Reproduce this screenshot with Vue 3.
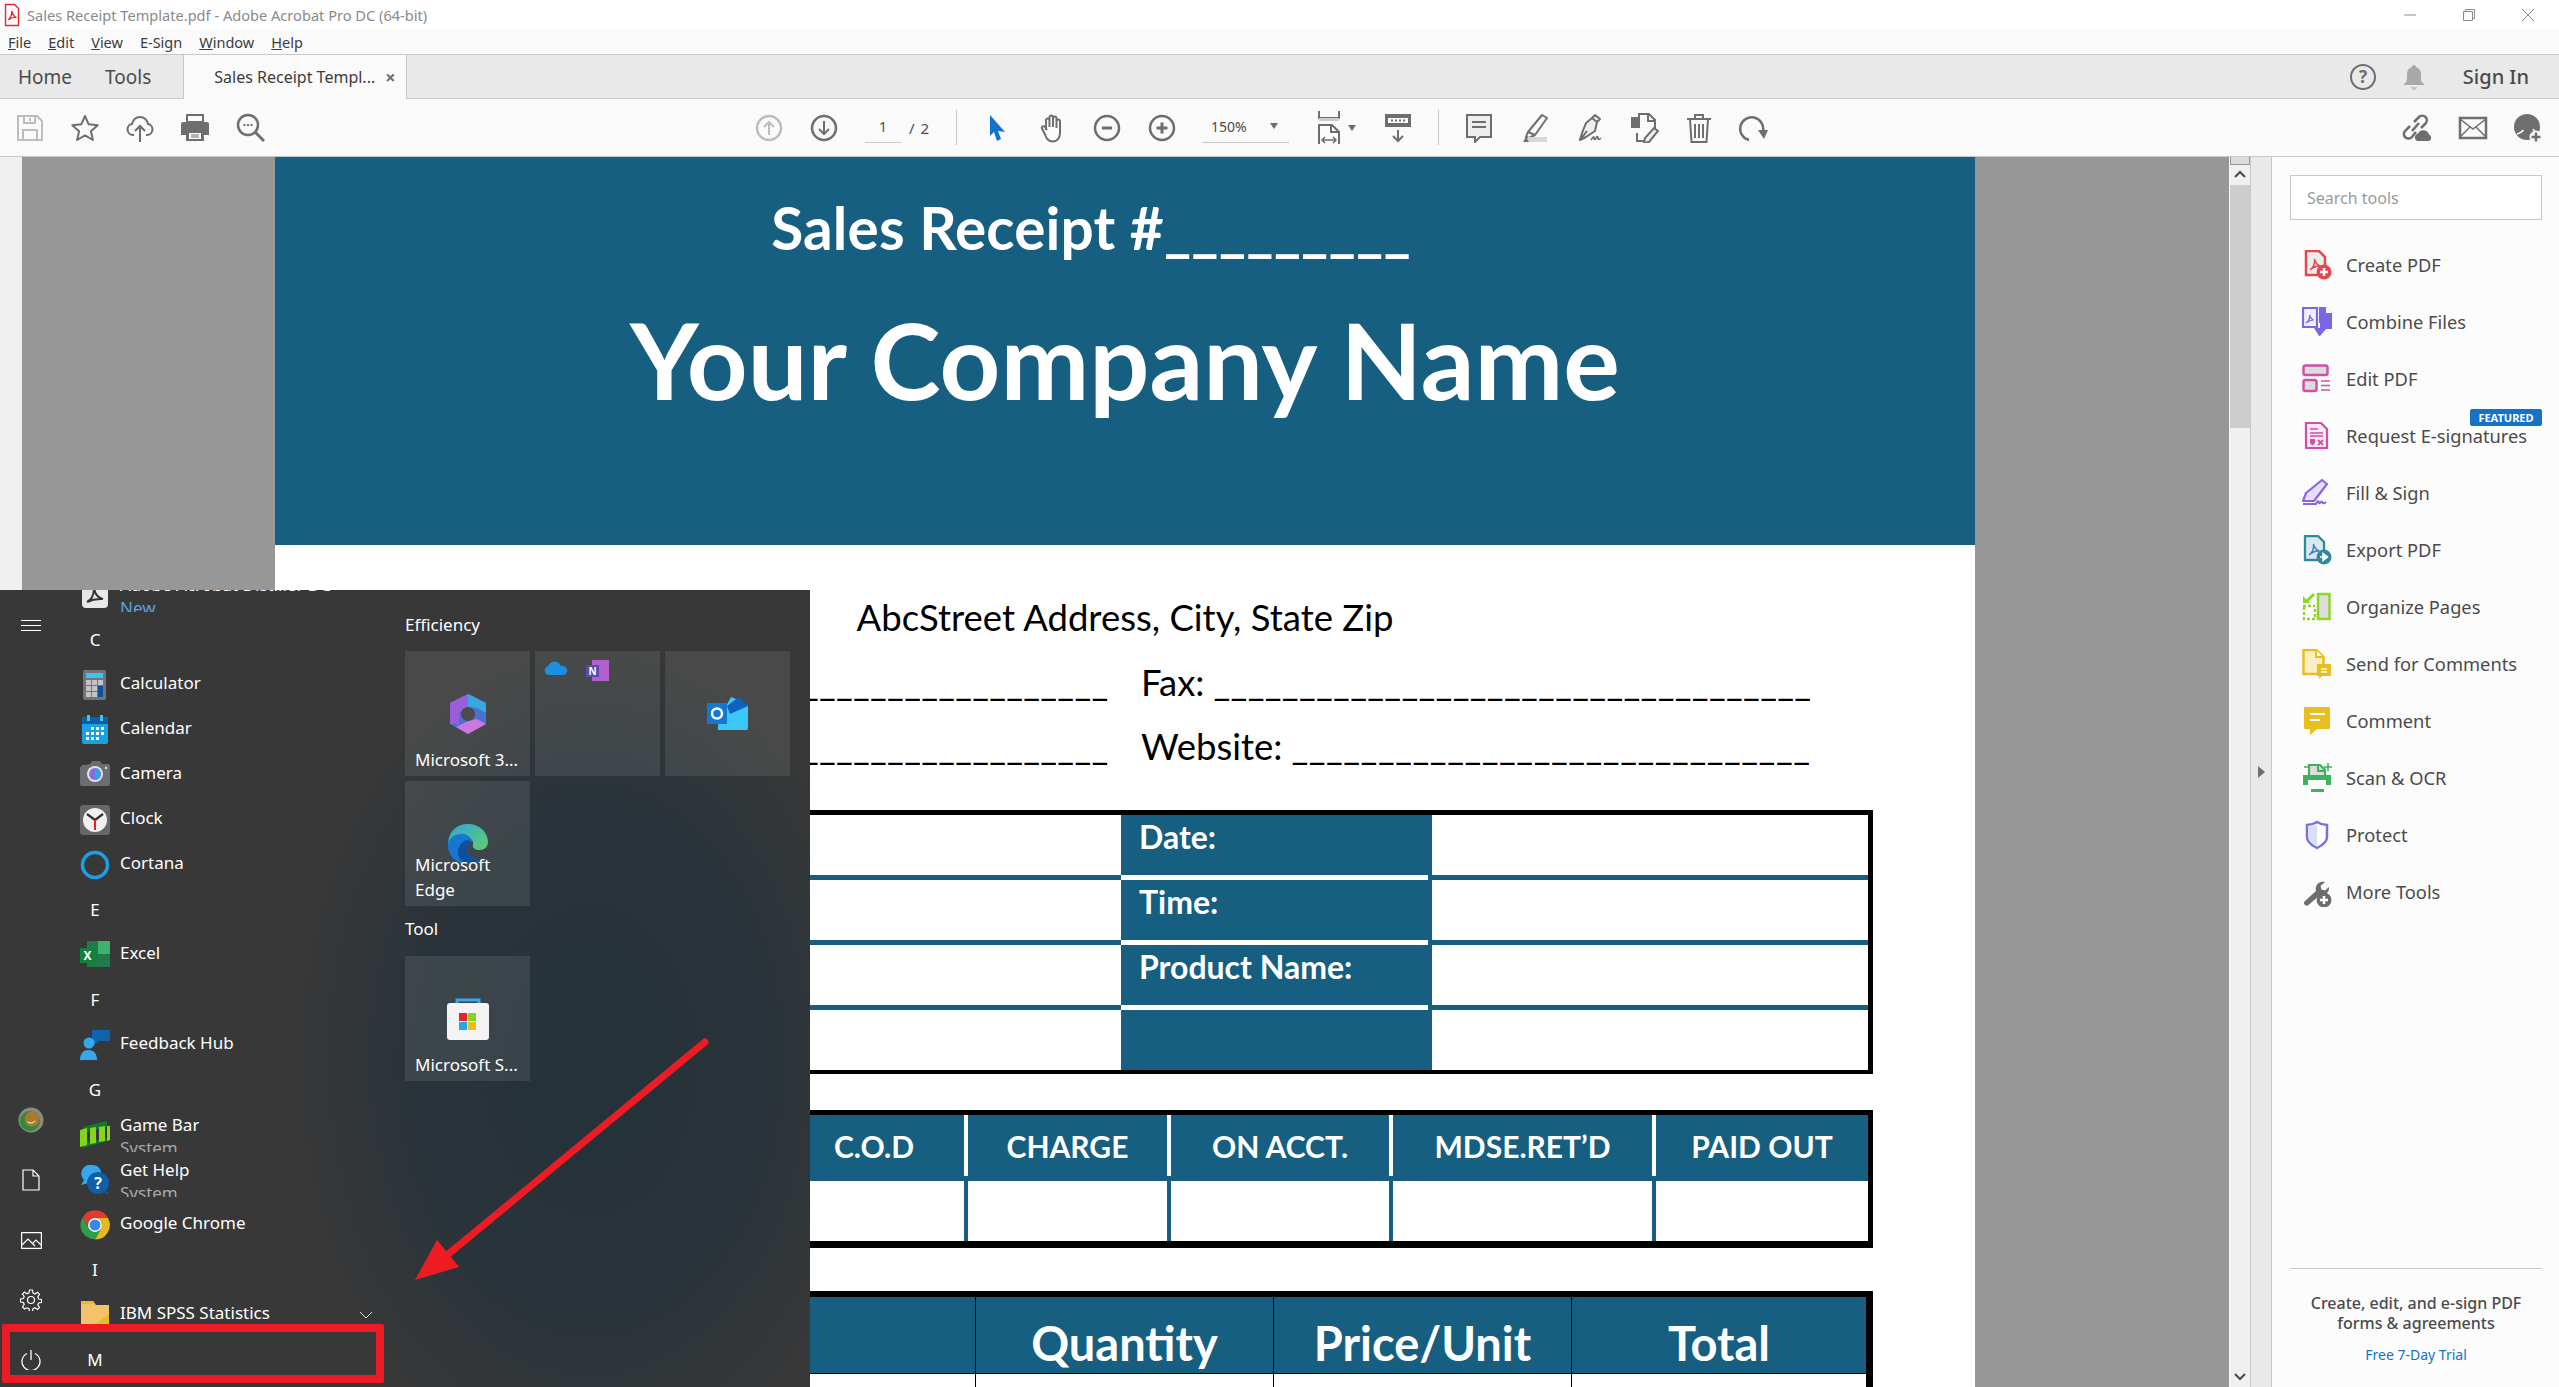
<script setup>
const menus = [
  { key: 'F', rest: 'ile' },
  { key: 'E', rest: 'dit' },
  { key: 'V', rest: 'iew' },
  { key: '', rest: 'E-Sign' },
  { key: 'W', rest: 'indow' },
  { key: 'H', rest: 'elp' },
]
const payCols = ['', 'C.O.D', 'CHARGE', 'ON ACCT.', 'MDSE.RET’D', 'PAID OUT']
const lineCols = ['', 'Quantity', 'Price/Unit', 'Total']
const infoRows = ['Date:', 'Time:', 'Product Name:', '']
const leadRule = '_'.repeat(18)
const faxRule = '_'.repeat(35)
const webRule = '_'.repeat(30)
</script>

<template>
  <div class="app">
    <div class="titlebar">
      <svg class="title-icon" width="16" height="24" viewBox="0 0 16 24">
        <path d="M1.500 1.500h9l4 4v17h-13z" fill="#fff" stroke="#e0282e" stroke-width="1.400" />
        <path d="M4 17c2-1 4-5 3.800-9 1 4 2.500 6 4.700 6.500-3-.3-6 .6-8.500 2.500z" fill="none" stroke="#e0282e" stroke-width="1.300" />
      </svg>
      <span class="title-text">Sales Receipt Template.pdf - Adobe Acrobat Pro DC (64-bit)</span>
      <div class="win-controls">
        <svg width="14" height="14" viewBox="0 0 14 14"><path d="M1 7h12" stroke="#8c8c8c" /></svg>
        <svg width="14" height="14" viewBox="0 0 14 14" fill="none" stroke="#8c8c8c"><path d="M1.500 3.500h9v9h-9zM3.500 3.500v-2h9v9h-2" /></svg>
        <svg width="14" height="14" viewBox="0 0 14 14"><path d="M1 1l12 12M13 1L1 13" stroke="#8c8c8c" /></svg>
      </div>
    </div>

    <div class="menubar">
      <span v-for="m in menus" :key="m.rest"><u>{{ m.key }}</u>{{ m.rest }}</span>
    </div>

    <div class="tabbar">
      <span class="tab-link home">Home</span>
      <span class="tab-link tools">Tools</span>
      <div class="doc-tab">
        <span>Sales Receipt Templ...</span>
        <b class="tab-close">×</b>
      </div>
      <div class="tab-right">
        <svg width="28" height="28" viewBox="0 0 28 28">
          <circle cx="14" cy="14" r="12" fill="none" stroke="#6e6e6e" stroke-width="2" />
          <text x="14" y="20" text-anchor="middle" class="help-mark">?</text>
        </svg>
        <svg width="26" height="28" viewBox="0 0 26 28">
          <path d="M13 2c-1.500 0-2 1-2 2-3 1-5 3.500-5 7v5c0 2-1 3.500-3 5v1h20v-1c-2-1.500-3-3-3-5v-5c0-3.500-2-6-5-7 0-1-.5-2-2-2z" fill="#a9a9a9" />
          <path d="M10 24h6c0 2-1.300 3-3 3s-3-1-3-3z" fill="#c4c4c4" />
        </svg>
        <span class="sign-in">Sign In</span>
      </div>
    </div>

    <div class="toolbar">
      <div class="tb-group tb-left">
        <svg width="30" height="30" viewBox="0 0 30 30" fill="none" stroke="#bdbdbd" stroke-width="2">
          <path d="M3 3h19l5 5v19H3z" /><path d="M9 3v7h11V3M8 27v-10h14v10" /><path d="M15 5v3" />
        </svg>
        <svg width="30" height="30" viewBox="0 0 30 30" fill="none" stroke="#6e6e6e" stroke-width="2">
          <path d="M15 3l3.700 8.300 9 .9-6.800 6 2 8.800L15 22.400 7.100 27l2-8.800-6.800-6 9-.9z" stroke-linejoin="round" />
        </svg>
        <svg width="30" height="30" viewBox="0 0 30 30" fill="none" stroke="#6e6e6e" stroke-width="2">
          <path d="M9 22H8a5.500 5.500 0 0 1-1-10.900C8 7 11 4 15 4s7.500 3 8 7.100A5.500 5.500 0 0 1 22 22h-1" />
          <path d="M15 29V13M10 18l5-5 5 5" />
        </svg>
        <svg width="30" height="30" viewBox="0 0 30 30">
          <path d="M7 2h16v7H7z" fill="none" stroke="#6e6e6e" stroke-width="2" />
          <path d="M3 9h24a2 2 0 0 1 2 2v11h-5v-4H6v4H1V11a2 2 0 0 1 2-2z" fill="#6e6e6e" />
          <path d="M6 17h18v11H6z" fill="#6e6e6e" /><path d="M9 20h12v6H9z" fill="#fafafa" />
          <path d="M11 22h8M11 24h8" stroke="#6e6e6e" />
        </svg>
        <svg width="30" height="30" viewBox="0 0 30 30" fill="none" stroke="#6e6e6e">
          <circle cx="13" cy="12" r="10" stroke-width="2.500" /><path d="M20 19l9 9" stroke-width="3" />
          <path d="M8.500 12h2M12 12h2M15.500 12h2" stroke-width="2" />
        </svg>
      </div>

      <div class="tb-group tb-pager">
        <svg width="30" height="30" viewBox="0 0 30 30" fill="none" stroke="#bdbdbd" stroke-width="2">
          <circle cx="15" cy="15" r="12" stroke-width="2.500" /><path d="M15 22V9M10 14l5-5 5 5" />
        </svg>
        <svg width="30" height="30" viewBox="0 0 30 30" fill="none" stroke="#6e6e6e" stroke-width="2">
          <circle cx="15" cy="15" r="12" stroke-width="2.500" /><path d="M15 8v13M10 16l5 5 5-5" />
        </svg>
      </div>
      <span class="page-input">1</span>
      <span class="page-total">/ 2</span>
      <i class="tb-sep first"></i>

      <div class="tb-group tb-nav">
        <svg width="30" height="30" viewBox="0 0 30 30">
          <path d="M8 2l15 17-7-1 3 8-4 2-3-9-4 4z" fill="#1473c7" />
        </svg>
        <svg width="30" height="30" viewBox="0 0 30 30" fill="none" stroke="#6e6e6e" stroke-width="2" stroke-linejoin="round">
          <path d="M9 17V7a1.800 1.800 0 0 1 3.500 0v7M12.500 14V4a1.800 1.800 0 0 1 3.500 0v10M16 14V5a1.800 1.800 0 0 1 3.500 0v10M19.500 15V8a1.800 1.800 0 0 1 3.500 0v12c0 5-3 8.500-7 8.500-5 0-6.500-3-8-7l-3-6c-.8-2 2-3 3-1.500l2 3" />
        </svg>
        <svg width="30" height="30" viewBox="0 0 30 30" fill="none" stroke="#6e6e6e">
          <circle cx="15" cy="15" r="12" stroke-width="2.500" /><path d="M10 15h10" stroke-width="3" />
        </svg>
        <svg width="30" height="30" viewBox="0 0 30 30" fill="none" stroke="#6e6e6e">
          <circle cx="15" cy="15" r="12" stroke-width="2.500" /><path d="M9.500 15h11M15 9.500v11" stroke-width="3" />
        </svg>
      </div>
      <div class="zoom-input">
        <span>150%</span>
        <i class="caret"></i>
      </div>
      <svg class="tb-fit" width="30" height="34" viewBox="0 0 30 34" fill="none" stroke="#6e6e6e" stroke-width="2">
        <path d="M5 0v7h20V0" /><path d="M5 7h20v3H5z" fill="#ccc" stroke="none" />
        <path d="M5 33V14h13l7 7v12" /><path d="M17 14v7h8" />
        <path d="M8 29h14M11 26l-3 3 3 3M19 26l3 3-3 3" stroke-width="1.500" />
      </svg>
      <i class="caret fit-caret"></i>
      <svg class="tb-kb" width="30" height="30" viewBox="0 0 30 30">
        <path d="M2 1h26v13H2z" fill="#6e6e6e" /><path d="M5 5h20v5H5z" fill="#fafafa" />
        <path d="M8 7.500h14" stroke="#6e6e6e" stroke-width="2" stroke-dasharray="2 2" />
        <path d="M15 17v11M10 23l5 5 5-5" fill="none" stroke="#6e6e6e" stroke-width="2" />
      </svg>
      <i class="tb-sep second"></i>

      <div class="tb-group tb-edit">
        <svg width="30" height="30" viewBox="0 0 30 30" fill="none" stroke="#6e6e6e" stroke-width="2">
          <path d="M3 2h24v22H16l-5 5v-5H3z" fill="#eee" /><path d="M8 9h14M8 14h14" />
        </svg>
        <svg width="30" height="30" viewBox="0 0 30 30" fill="none" stroke="#6e6e6e" stroke-width="2">
          <path d="M23 2l5 3-12 17-7-3z" stroke-linejoin="round" /><path d="M9 19l-2 5 3 1 6-3" />
          <path d="M9 24h19v5H9z" fill="#d8d8d8" stroke="none" />
          <path d="M7 24l-3 5h6z" fill="#6e6e6e" stroke="none" />
        </svg>
        <svg width="30" height="30" viewBox="0 0 30 30" fill="none" stroke="#6e6e6e" stroke-width="2" stroke-linejoin="round">
          <path d="M21 2l5 4-3 3-5-4zM18 5l5 4-2 9-9 6-6 3 2-7 4-10z" fill="#eee" /><path d="M6 27l7-9" />
          <path d="M17 27c2-3 3-4 3-2s1 2 2 0 2-2 2 0 1 2 3 0" stroke-width="1.700" />
        </svg>
        <svg width="30" height="30" viewBox="0 0 30 30" fill="none" stroke="#6e6e6e" stroke-width="2">
          <path d="M10 4V1h10l6 6v11M8 20v8h9" /><path d="M19 1v7h7" />
          <path d="M3 5h7v9H3z" fill="#6e6e6e" /><path d="M25 15l4 3-9 11-5 1 1-5z" fill="#eee" />
        </svg>
        <svg width="30" height="30" viewBox="0 0 30 30" fill="none" stroke="#6e6e6e" stroke-width="2">
          <path d="M3 6h24M11 6V2h8v4" /><path d="M6 6l1.500 23h15L24 6z" /><path d="M11 11v14M15 11v14M19 11v14" />
        </svg>
        <svg width="30" height="30" viewBox="0 0 30 30" fill="none" stroke="#6e6e6e" stroke-width="2.500">
          <path d="M10 27A11.500 11.500 0 1 1 24 18" />
          <path d="M19 17h10l-4 9z" fill="#6e6e6e" stroke="none" />
        </svg>
      </div>

      <div class="tb-group tb-right">
        <svg width="32" height="30" viewBox="0 0 32 30" fill="none" stroke="#6e6e6e" stroke-width="2.500">
          <path d="M13 9l5-5a4.500 4.500 0 0 1 6.500 6.500L20 15" /><path d="M15 19l-4 5a4.500 4.500 0 0 1-7-6l5-5" /><path d="M11 18l7-8" />
          <path d="M16 28a4 4 0 0 1 1-7.500 6 6 0 0 1 11 1A3.500 3.500 0 0 1 28 28z" fill="#6e6e6e" stroke="none" />
        </svg>
        <svg width="30" height="30" viewBox="0 0 30 30" fill="none" stroke="#6e6e6e" stroke-width="2.500">
          <path d="M2 5h26v20H2z" /><path d="M2 6l13 10L28 6M2 24l10-10M28 24L18 14" stroke-width="1.500" />
        </svg>
        <svg width="30" height="30" viewBox="0 0 30 30">
          <circle cx="14" cy="14" r="13" fill="#6e6e6e" />
          <path d="M4 21c3-1 5-2 6.500-4M20 16c.5 1 1 1.500 2 2" fill="none" stroke="#fafafa" stroke-width="1.600" />
          <circle cx="23" cy="24" r="6.500" fill="#fafafa" />
          <path d="M23 19.500v9M18.500 24h9" stroke="#6e6e6e" stroke-width="2.500" />
        </svg>
      </div>
    </div>

    <div class="workspace">
      <div class="gutter"></div>
      <div class="canvas">
        <div class="page">
          <header class="band">
            <div class="receipt-no">Sales Receipt #_________</div>
            <div class="company">Your Company Name</div>
          </header>
          <div class="address">AbcStreet Address, City, State Zip</div>
          <div class="field-row">
            <span class="blank lead">{{ leadRule }}</span>
            <span class="label">Fax:</span>
            <span class="blank">{{ faxRule }}</span>
          </div>
          <div class="field-row second">
            <span class="blank lead">{{ leadRule }}</span>
            <span class="label">Website:</span>
            <span class="blank web">{{ webRule }}</span>
          </div>

          <div class="info-table">
            <div v-for="(row, i) in infoRows" :key="i" class="info-row">
              <div class="info-cell"></div>
              <div class="info-cell key">{{ row }}</div>
              <div class="info-cell"></div>
            </div>
          </div>

          <div class="pay-table">
            <div class="pay-head">
              <div v-for="c in payCols" :key="c" class="pay-cell">{{ c }}</div>
            </div>
            <div class="pay-body">
              <div v-for="c in payCols" :key="c" class="pay-cell"></div>
            </div>
          </div>

          <div class="line-table">
            <div class="line-head">
              <div v-for="c in lineCols" :key="c" class="line-cell">{{ c }}</div>
            </div>
            <div class="line-body">
              <div v-for="c in lineCols" :key="c" class="line-cell"></div>
            </div>
          </div>
        </div>
      </div>

      <div class="scrollbar">
        <div class="scroll-grip"></div>
        <svg width="20" height="20" viewBox="0 0 20 20"><path d="M5 12l5-5 5 5" fill="none" stroke="#4b4b5b" stroke-width="2.200" /></svg>
        <div class="scroll-thumb"></div>
        <div class="scroll-track"></div>
        <svg width="20" height="20" viewBox="0 0 20 20"><path d="M5 7l5 5 5-5" fill="none" stroke="#4b4b5b" stroke-width="2.200" /></svg>
      </div>

      <div class="divider"><i></i></div>

      <aside class="panel">
        <div class="search-box">Search tools</div>
        <div class="tool-list">
          <div class="tool">
            <svg width="30" height="30" viewBox="0 0 30 30">
              <path d="M4 1h13l6 6v18H4z" fill="#eee" stroke="#e8464f" stroke-width="2.500" />
              <path d="M8 20c3-2 5-6 4.500-11 1 4 3 6.500 6 7-4-.3-7.500 1.200-10.500 4z" fill="none" stroke="#e8464f" stroke-width="1.400" />
              <circle cx="22" cy="22" r="7.500" fill="#e8464f" /><path d="M18 22h8M22 18v8" stroke="#fff" stroke-width="2.500" />
            </svg>
            <span>Create PDF</span>
          </div>
          <div class="tool">
            <svg width="30" height="30" viewBox="0 0 30 30">
              <path d="M1 1h14v19H1z" fill="#f0effc" stroke="#7a68e2" stroke-width="2.200" />
              <path d="M4 16c2.500-1.500 4-4 3.700-8 .7 3 2 4.500 4 5-2.500 0-5 1-7.700 3z" fill="none" stroke="#7a68e2" stroke-width="1.200" />
              <path d="M17 0h7l6 6v16h-9V16h-4z" fill="#7a68e2" /><path d="M24 0l6 6h-6z" fill="#fff" />
              <path d="M12 21h6v-7h3v7h4l-7 8h-1z" fill="#7a68e2" />
            </svg>
            <span>Combine Files</span>
          </div>
          <div class="tool">
            <svg width="30" height="30" viewBox="0 0 30 30">
              <rect x="1.500" y="1.500" width="24" height="9.500" rx="2" fill="#ddd" stroke="#cf4fa9" stroke-width="2.500" />
              <rect x="1.500" y="16" width="13" height="11" rx="2" fill="#ddd" stroke="#cf4fa9" stroke-width="2.500" />
              <path d="M19 17h9M19 21.500h9M19 26h9" stroke="#cf4fa9" stroke-width="1.500" />
            </svg>
            <span>Edit PDF</span>
          </div>
          <div class="tool featured">
            <svg width="30" height="30" viewBox="0 0 30 30">
              <path d="M4 2h15l6 6v19H4z" fill="#f8eaf5" stroke="#cf4fa9" stroke-width="2.200" />
              <path d="M8 8h8M8 12h13M8 15h13" stroke="#cf4fa9" stroke-width="1.500" />
              <path d="M8 18h5v4l-2.500 2.500L8 22z" fill="#cf4fa9" /><path d="M16 19l5 5M21 19l-5 5" stroke="#cf4fa9" stroke-width="1.800" />
            </svg>
            <span>Request E-signatures</span>
            <b class="badge">FEATURED</b>
          </div>
          <div class="tool">
            <svg width="30" height="30" viewBox="0 0 30 30">
              <path d="M20 2l5 4-13 17H1l3-8z" fill="#e6defa" stroke="#8a63e0" stroke-width="2.200" stroke-linejoin="round" />
              <path d="M1 26h13c1-2 2-3.500 2.500-2.500S17 26 18.500 24.500s1.500-1 2 0 2 1 3.500-.5" fill="none" stroke="#8a63e0" stroke-width="2" />
            </svg>
            <span>Fill &amp; Sign</span>
          </div>
          <div class="tool">
            <svg width="30" height="30" viewBox="0 0 30 30">
              <path d="M3 1h13l6 6v18H3z" fill="#dde7f2" stroke="#2f8a9a" stroke-width="2.300" />
              <path d="M7 20c3-2 5-6 4.500-11 1 4 3 6.500 6 7-4-.3-7.500 1.200-10.500 4z" fill="none" stroke="#3b83c6" stroke-width="1.400" />
              <circle cx="22" cy="22" r="7.500" fill="#2f8a9a" /><path d="M18 22h5M21 18.500l4.500 3.500-4.500 3.500z" fill="#fff" stroke="#fff" stroke-width="1.500" />
            </svg>
            <span>Export PDF</span>
          </div>
          <div class="tool">
            <svg width="30" height="30" viewBox="0 0 30 30">
              <rect x="16" y="2" width="11.500" height="25" fill="#ddd" stroke="#8fd629" stroke-width="2.500" />
              <path d="M1 14h12M2 15v12h11V15" fill="none" stroke="#8fd629" stroke-width="2.300" stroke-dasharray="3 2" />
              <path d="M12 2L4 10" fill="none" stroke="#8fd629" stroke-width="3" />
              <path d="M1 4v7h7z" fill="#8fd629" />
            </svg>
            <span>Organize Pages</span>
          </div>
          <div class="tool">
            <svg width="30" height="30" viewBox="0 0 30 30">
              <path d="M1.500 1h13l7 7v17h-20z" fill="#fbeec2" stroke="#e8bf1e" stroke-width="2.500" />
              <path d="M14 1v7h7" fill="#fff" stroke="#e8bf1e" stroke-width="2" />
              <path d="M15 15h14v12H20l-3 3v-3h-2z" fill="#e8bf1e" /><path d="M19 20h6M19 23h6" stroke="#fff" stroke-width="1.400" />
            </svg>
            <span>Send for Comments</span>
          </div>
          <div class="tool">
            <svg width="30" height="30" viewBox="0 0 30 30">
              <path d="M3 1h24a1 1 0 0 1 1 1v20a1 1 0 0 1-1 1H15l-7 6v-6H3a1 1 0 0 1-1-1V2a1 1 0 0 1 1-1z" fill="#e8bf1e" />
              <path d="M8 8h15M8 14h10" stroke="#fff" stroke-width="2.200" />
            </svg>
            <span>Comment</span>
          </div>
          <div class="tool">
            <svg width="30" height="30" viewBox="0 0 30 30">
              <path d="M7 12V2h11l5 5v5" fill="#ddd" stroke="#3db35c" stroke-width="2.200" />
              <path d="M16 2v6h7" fill="none" stroke="#3db35c" stroke-width="2" />
              <path d="M1 12h28v10h-5v-5H6v5H1z" fill="#3db35c" />
              <path d="M9 26h13v3H9z" fill="#3db35c" />
              <path d="M26 0v8M22 4h8M2 4h4" stroke="#3db35c" stroke-width="1.500" />
            </svg>
            <span>Scan &amp; OCR</span>
          </div>
          <div class="tool">
            <svg width="30" height="30" viewBox="0 0 30 30">
              <path d="M15 2c4 2.500 7 3 10 3v12c0 5-5 8.500-10 11-5-2.500-10-6-10-11V5c3 0 6-.5 10-3z" fill="#fff" stroke="#7a6fe2" stroke-width="2.500" />
              <path d="M15 4c-3 1.800-5.500 2.400-8 2.500V17c0 4 4 7 8 9z" fill="#d6e2f4" />
            </svg>
            <span>Protect</span>
          </div>
          <div class="tool">
            <svg width="30" height="30" viewBox="0 0 30 30">
              <path d="M3 24l11-10c-1-4 1-8 5-9 2-.5 3.500-.2 4 0l-4.500 4 1 3.500 3.500 1 4-3.500c.5 3-1 6-4 7.500-2 1-4 1-5 .5L6.500 28a2.500 2.500 0 0 1-3.500-4z" fill="#6e6e6e" />
              <circle cx="22" cy="23" r="7.500" fill="#6e6e6e" /><path d="M18 23h8M22 19v8" stroke="#fff" stroke-width="2.500" />
            </svg>
            <span>More Tools</span>
          </div>
        </div>
        <div class="promo">
          <p>Create, edit, and e-sign PDF<br />forms &amp; agreements</p>
          <a>Free 7-Day Trial</a>
        </div>
      </aside>
    </div>

    <div class="start-menu">
      <nav class="rail">
        <svg class="hamburger" width="20" height="12" viewBox="0 0 20 12"><path d="M0 .5h20M0 5.500h20M0 10.500h20" stroke="#fff" /></svg>
        <div class="rail-bottom">
          <div class="rail-item">
            <svg width="26" height="26" viewBox="0 0 26 26">
              <circle cx="13" cy="13" r="12.500" fill="#8a8a80" /><circle cx="12" cy="14" r="10" fill="#2f8a3a" />
              <circle cx="14" cy="12" r="7.500" fill="#a87a2a" /><path d="M9 14c3 2 6 2 9-1-1 4-7 5-9 1z" fill="#f4e4c4" />
            </svg>
          </div>
          <div class="rail-item">
            <svg width="18" height="22" viewBox="0 0 18 22" fill="none" stroke="#fff" stroke-width="1.200"><path d="M1 1h10l6 6v14H1zM11 1v6h6" /></svg>
          </div>
          <div class="rail-item">
            <svg width="21" height="17" viewBox="0 0 21 17" fill="none" stroke="#fff" stroke-width="1.200"><path d="M.6.600h19.800v15.800H.6zM1 13l6-6 7 7M12 11l3-3 5 5" /></svg>
          </div>
          <div class="rail-item">
            <svg width="22" height="22" viewBox="0 0 22 22" fill="none" stroke="#fff" stroke-width="1.200">
              <circle cx="11" cy="11" r="3.500" />
              <path d="M9.500 1h3l.5 3 2 1 2.500-1.700 2 2-1.700 2.700.8 2 3 .5v3l-3 .5-.8 2 1.700 2.500-2 2-2.500-1.700-2 .8-.5 3h-3l-.5-3-2-.8L4.500 20l-2-2 1.700-2.500-.8-2-3-.5V10l3-.5.8-2L2.500 5l2-2L7 4.700l2-.8z" />
            </svg>
          </div>
          <div class="rail-item">
            <svg width="20" height="20" viewBox="0 0 20 20" fill="none" stroke="#fff" stroke-width="1.300"><path d="M6 3.500a9 9 0 1 0 8 0M10 0v10" /></svg>
          </div>
        </div>
      </nav>

      <div class="app-list">
        <div class="app-row">
          <svg class="app-icon" width="30" height="30" viewBox="0 0 30 30">
            <rect x="2" y="2" width="26" height="26" rx="4" fill="#e8e8e8" />
            <path d="M7 22c4-2 7-7 7-14 1 6 4 10 9 11-6-.5-11 .5-16 3z" fill="none" stroke="#333" stroke-width="2" />
          </svg>
          <div class="app-text">
            <span>Adobe Acrobat Distiller DC</span>
            <small class="new">New</small>
          </div>
        </div>
        <div class="app-letter">C</div>
        <div class="app-row">
          <svg class="app-icon" width="30" height="30" viewBox="0 0 30 30">
            <rect x="3" y="0" width="23" height="30" rx="2" fill="#70757a" />
            <path d="M6 3h17v5H6z" fill="#3cc4f0" />
            <path d="M6 10h5v5H6zM12 10h5v5h-5zM18 10h5v5h-5zM6 16h5v5H6zM12 16h5v5h-5zM6 22h5v5H6zM12 22h5v5h-5z" fill="#c4c4c4" />
            <path d="M18 16h5v11h-5z" fill="#0f4f9a" />
          </svg>
          <span>Calculator</span>
        </div>
        <div class="app-row">
          <svg class="app-icon" width="30" height="30" viewBox="0 0 30 30">
            <rect x="2" y="2" width="26" height="27" rx="2" fill="#1ba1e2" />
            <path d="M2 4a2 2 0 0 1 2-2h22a2 2 0 0 1 2 2v5H2z" fill="#0f5fa8" />
            <path d="M7 0h3v6H7zM20 0h3v6h-3z" fill="#3cc4f0" />
            <path d="M11 12h3v3h-3zM16 12h3v3h-3zM21 12h3v3h-3zM6 17h3v3H6zM11 17h3v3h-3zM16 17h3v3h-3zM21 17h3v3h-3zM6 22h3v3H6zM11 22h3v3h-3zM16 22h3v3h-3z" fill="#fff" />
          </svg>
          <span>Calendar</span>
        </div>
        <div class="app-row">
          <svg class="app-icon" width="30" height="30" viewBox="0 0 30 30">
            <path d="M2 5h5v3H2z" fill="#2a8fd0" />
            <path d="M10 4l2-3h8l2 3h6a2 2 0 0 1 2 2v18a2 2 0 0 1-2 2H2a2 2 0 0 1-2-2V8a2 2 0 0 1 2-2z" fill="#6a6d72" />
            <circle cx="15" cy="14" r="8" fill="#e4e4e4" /><circle cx="15" cy="14" r="6" fill="#8a6ae0" />
            <path d="M15 8a6 6 0 0 1 0 12z" fill="#3aa0e8" /><circle cx="26" cy="8" r="1.200" fill="#ddd" />
          </svg>
          <span>Camera</span>
        </div>
        <div class="app-row">
          <svg class="app-icon" width="30" height="30" viewBox="0 0 30 30">
            <rect x="0" y="0" width="30" height="30" rx="3" fill="#65676b" />
            <circle cx="15" cy="15" r="12" fill="#f0f0f0" />
            <path d="M7 9l8 6 8-6" fill="none" stroke="#333" stroke-width="2.200" /><path d="M15 15v10" stroke="#e0202a" stroke-width="2" />
          </svg>
          <span>Clock</span>
        </div>
        <div class="app-row">
          <svg class="app-icon" width="30" height="30" viewBox="0 0 30 30">
            <circle cx="15" cy="15" r="12.500" fill="none" stroke="#1d9fe8" stroke-width="3.500" />
          </svg>
          <span>Cortana</span>
        </div>
        <div class="app-letter">E</div>
        <div class="app-row">
          <svg class="app-icon" width="30" height="30" viewBox="0 0 30 30">
            <path d="M7 1h23v26H7z" fill="#1f7a46" /><path d="M18 1h12v13H18z" fill="#3fb36a" /><path d="M18 14h12v13H18z" fill="#217a4a" />
            <path d="M0 8h15v15H0z" fill="#15803d" />
            <text x="7.500" y="20" text-anchor="middle" class="xl-mark">X</text>
          </svg>
          <span>Excel</span>
        </div>
        <div class="app-letter">F</div>
        <div class="app-row">
          <svg class="app-icon" width="30" height="30" viewBox="0 0 30 30">
            <path d="M12 0h18v11H19l-5 4v-4h-2z" fill="#0f62ae" />
            <circle cx="9" cy="13" r="5.500" fill="#35a8ec" /><path d="M0 30c0-6 3-10 8.500-10S17 24 17 30z" fill="#35a8ec" />
          </svg>
          <span>Feedback Hub</span>
        </div>
        <div class="app-letter">G</div>
        <div class="app-row">
          <svg class="app-icon" width="30" height="30" viewBox="0 0 30 30">
            <path d="M3 7l24-6v6L3 13zM3 23l24-5v3L3 28z" fill="#117a2a" />
            <path d="M0 10l7-2v17l-7 2zM10 8l6-1v16l-6 1zM19 7l6-1v15l-6 1zM27 6l3 0v14l-3 1z" fill="#84d61c" />
          </svg>
          <div class="app-text">
            <span>Game Bar</span>
            <small>System</small>
          </div>
        </div>
        <div class="app-row">
          <svg class="app-icon" width="30" height="30" viewBox="0 0 30 30">
            <path d="M13 0a9 9 0 0 1 5 16l-9 2-8 2 3-5A9 9 0 0 1 13 0z" fill="#35a8ec" />
            <circle cx="18" cy="18" r="11" fill="#0f5fa8" /><path d="M26 26l4 3-6-.5z" fill="#0f5fa8" />
            <text x="18" y="24" text-anchor="middle" class="help-tile">?</text>
          </svg>
          <div class="app-text">
            <span>Get Help</span>
            <small>System</small>
          </div>
        </div>
        <div class="app-row">
          <svg class="app-icon" width="30" height="30" viewBox="0 0 30 30">
            <path d="M15 8h13A14.500 14.500 0 0 0 2.500 7.500l6.300 11A7 7 0 0 1 15 8z" fill="#df3b30" />
            <path d="M15 8h13a14.500 14.500 0 0 1-13 21.500l6-10.900A7 7 0 0 0 15 8z" fill="#e8b81f" />
            <path d="M2.500 7.500l6.300 11a7 7 0 0 0 12.200 0l-6 10.900A14.500 14.500 0 0 1 2.500 7.500z" fill="#2f9e4a" />
            <circle cx="15" cy="15" r="7" fill="#fff" /><circle cx="15" cy="15" r="5.500" fill="#3b86e8" />
          </svg>
          <span>Google Chrome</span>
        </div>
        <div class="app-letter">I</div>
        <div class="app-row">
          <svg class="app-icon" width="30" height="30" viewBox="0 0 30 30">
            <path d="M1 1h12l3 4h13v25H1z" fill="#f2c36c" /><path d="M1 1h12l2 3H1z" fill="#e8bf1e" /><path d="M29 14v16H8z" fill="#e8bf1e" />
          </svg>
          <span>IBM SPSS Statistics</span>
          <svg class="chevron" width="14" height="8" viewBox="0 0 14 8"><path d="M1 1l6 6 6-6" fill="none" stroke="#ddd" /></svg>
        </div>
        <div class="app-letter">M</div>
      </div>

      <div class="tiles">
        <div class="tile-title">Efficiency</div>
        <div class="tile-grid">
          <div class="tile">
            <svg width="40" height="42" viewBox="0 0 40 42">
              <path d="M20 1l18 9v21l-18 10L2 31V10z" fill="#4f6fd0" />
              <path d="M2 10l18-9v13l-9 5v12L2 31z" fill="#9a5fd8" /><path d="M20 1l18 9v10l-9-5-9-1z" fill="#38a8e0" />
              <path d="M8 34l12-6 9-2 9 5-18 10z" fill="#c878e0" /><circle cx="20" cy="21" r="7" fill="#4b4b4b" />
            </svg>
            <span class="tile-label">Microsoft 3...</span>
          </div>
          <div class="tile folder">
            <svg width="24" height="16" viewBox="0 0 24 16">
              <path d="M5 15a4.500 4.500 0 0 1-1-8.800A7 7 0 0 1 17 6a4.500 4.500 0 0 1 3 9z" fill="#1c8fe0" />
            </svg>
            <svg width="24" height="22" viewBox="0 0 24 22">
              <path d="M6 0h17v21H6z" fill="#b45fd0" /><path d="M0 5h13v12H0z" fill="#5b4bb0" />
              <text x="6.500" y="14.500" text-anchor="middle" class="note-mark">N</text>
            </svg>
          </div>
          <div class="tile">
            <svg width="42" height="36" viewBox="0 0 42 36">
              <path d="M24 1l10 4 7 5v22a2 2 0 0 1-2 2H11v-9z" fill="#3bc8f8" /><path d="M20 10L32 1l9 9-18 8z" fill="#0f62c0" />
              <path d="M0 7h20v21H0z" fill="#1478d0" /><circle cx="10" cy="17.500" r="5" fill="none" stroke="#fff" stroke-width="2.500" />
            </svg>
          </div>
          <div class="tile">
            <svg width="42" height="42" viewBox="0 0 42 42">
              <defs>
                <linearGradient id="edge-top" x1="0" y1="0" x2="1" y2="1">
                  <stop offset="0" stop-color="#33a4d8" /><stop offset="1" stop-color="#5ed06a" />
                </linearGradient>
              </defs>
              <path d="M1 20C2 8 10 1 21 1c11 0 20 8 20 18 0 5-4 8-8 8-5 0-8-2-7-6 1-5-6-9-13-6-6 2-10 7-12 5z" fill="url(#edge-top)" />
              <path d="M1 20c2-6 9-10 16-9 5 1 8 5 8 8-4 2-7 7-3 13 2 3 8 5 12 5-4 3-9 4-14 4C9 41 0 32 1 20z" fill="#1478d0" />
              <path d="M18 40c-6-3-9-9-6-16 1-3 4-6 8-7 3 1 5 2 5 2-4 2-7 7-3 13 2 3 8 5 12 5-5 3-11 4-16 3z" fill="#0f4fa0" />
            </svg>
            <span class="tile-label">Microsoft<br />Edge</span>
          </div>
        </div>
        <div class="tile-title tool-title">Tool</div>
        <div class="tile-grid">
          <div class="tile">
            <svg width="42" height="42" viewBox="0 0 42 42">
              <path d="M10 8V2h22v6" fill="none" stroke="#35a8ec" stroke-width="3" />
              <rect x="0" y="5" width="42" height="37" rx="3" fill="#f3f3f3" />
              <path d="M12 15h8v8h-8z" fill="#e8222a" /><path d="M21 15h8v8h-8z" fill="#84d61c" /><path d="M12 24h8v8h-8z" fill="#1fa8ec" /><path d="M21 24h8v8h-8z" fill="#e8bf1e" />
            </svg>
            <span class="tile-label">Microsoft S...</span>
          </div>
        </div>
      </div>

      <div class="power-box"></div>
      <svg class="pointer-arrow" width="810" height="797" viewBox="0 0 810 797">
        <path d="M705 452L446 666" stroke="#ed1c24" stroke-width="7" stroke-linecap="round" />
        <path d="M415 690L437 650L459 677z" fill="#ed1c24" />
      </svg>
    </div>
  </div>
</template>

<style>
html,
body {
  margin: 0;
  background: #fafafa;
}
</style>

<style scoped>
.app {
  position: relative;
  display: flex;
  flex-direction: column;
  width: 2559px;
  height: 1387px;
  overflow: hidden;
  font-family: 'Noto Sans', 'Open Sans', sans-serif;
  color: #4b4b4b;
}
svg {
  flex: none;
  display: block;
}

/* window chrome */
.titlebar {
  display: flex;
  align-items: center;
  height: 29px;
  background: #fff;
  flex: none;
}
.title-icon {
  margin-left: 4px;
}
.title-text {
  margin-left: 7px;
  font-size: 14.6px;
  color: #8a8a8a;
}
.win-controls {
  display: flex;
  gap: 45px;
  margin-left: auto;
  margin-right: 24px;
}
.menubar {
  display: flex;
  align-items: center;
  gap: 17px;
  height: 25px;
  flex: none;
  padding-left: 8px;
  background: #fafafa;
  font-size: 14.5px;
  color: #3c3c3c;
}
.tabbar {
  display: flex;
  align-items: stretch;
  height: 43px;
  flex: none;
  background: #e9e9e9;
  border-top: 1px solid #c8c8c8;
  border-bottom: 1px solid #c8c8c8;
  font-size: 19px;
}
.tab-link {
  align-self: center;
}
.home {
  margin-left: 18px;
}
.tools {
  margin-left: 33px;
}
.doc-tab {
  display: flex;
  align-items: center;
  width: 224px;
  box-sizing: border-box;
  margin-left: 32px;
  margin-bottom: -1px;
  padding-left: 30px;
  background: #fafafa;
  border-left: 1px solid #c8c8c8;
  border-right: 1px solid #c8c8c8;
  font-size: 16px;
  color: #3c3c3c;
}
.tab-close {
  margin-left: 10px;
  font-size: 18px;
  color: #6e6e6e;
}
.tab-right {
  display: flex;
  align-items: center;
  margin-left: auto;
  padding-right: 30px;
}
.tab-right svg:nth-child(2) {
  margin-left: 24px;
}
.help-mark {
  font: 700 17px 'Noto Sans', sans-serif;
  fill: #6e6e6e;
}
.sign-in {
  margin-left: 36px;
  font-size: 20px;
  font-weight: 500;
}
.toolbar {
  display: flex;
  align-items: center;
  height: 57px;
  flex: none;
  background: #fafafa;
  border-bottom: 1px solid #c8c8c8;
  font-size: 14px;
}
.tb-group {
  display: flex;
  align-items: center;
  gap: 25px;
}
.tb-left {
  margin-left: 15px;
}
.tb-pager {
  margin-left: 489px;
}
.page-input {
  width: 36px;
  margin-left: 26px;
  padding: 4px 0 6px;
  border-bottom: 1px solid #c8c8c8;
  text-align: center;
}
.page-total {
  width: 22px;
  margin-left: 8px;
  font-size: 15px;
  word-spacing: 2px;
}
.tb-sep {
  width: 1px;
  height: 35px;
  background: #c8c8c8;
}
.tb-sep.first {
  margin-left: 25px;
}
.tb-sep.second {
  margin-left: 25px;
}
.tb-nav {
  margin-left: 25px;
}
.zoom-input {
  display: flex;
  align-items: center;
  justify-content: space-between;
  box-sizing: border-box;
  width: 87px;
  margin-left: 25px;
  padding: 4px 11px 6px 9px;
  border-bottom: 1px solid #c8c8c8;
}
.caret {
  width: 0;
  height: 0;
  border-left: 4px solid transparent;
  border-right: 4px solid transparent;
  border-top: 6px solid #6e6e6e;
}
.tb-fit {
  margin-left: 25px;
}
.fit-caret {
  margin-left: 4px;
}
.tb-kb {
  margin-left: 27px;
}
.tb-edit {
  margin-left: 25px;
}
.tb-right {
  margin-left: auto;
  padding-right: 16px;
}

/* viewer */
.workspace {
  display: flex;
  flex: 1;
  min-height: 0;
}
.gutter {
  width: 22px;
  background: #f0f0f0;
}
.canvas {
  flex: 1;
  min-width: 0;
  padding-left: 253px;
  background: #979797;
  overflow: hidden;
}
.page {
  width: 1700px;
  height: 1400px;
  background: #fff;
  color: #000;
  font-family: Lato, 'Noto Sans', sans-serif;
}
.band {
  height: 388px;
  box-sizing: border-box;
  padding-top: 35px;
  background: #165f81;
  color: #fff;
  font-weight: 700;
  text-align: center;
}
.receipt-no {
  padding-right: 68px;
  font-size: 58.5px;
  line-height: 70px;
  letter-spacing: 0.15px;
}
.company {
  margin-top: 32px;
  font-size: 106px;
  line-height: 130px;
}
.address {
  margin-top: 47px;
  font-size: 36.500px;
  line-height: 50px;
  text-align: center;
}
.field-row {
  display: flex;
  margin-top: 15px;
  padding: 0 165px 0 527px;
  font-size: 36.500px;
  line-height: 50px;
  white-space: nowrap;
}
.field-row.second {
  margin-top: 14px;
}
.blank {
  flex: 1;
  min-width: 0;
  letter-spacing: 0.33px;
}
.blank.web {
  letter-spacing: 0.55px;
}
.blank.lead {
  flex: none;
  width: 306px;
  letter-spacing: 0.27px;
}
.label {
  margin: 0 9px 0 33px;
}
.info-table {
  margin: 39px 102px 0 105px;
  border: 5px solid #000;
  border-bottom-width: 4px;
  border-left: 0;
}
.info-row {
  display: grid;
  grid-template-columns: 1fr 311px 436px;
  height: 65px;
  box-sizing: border-box;
  border-bottom: 5px solid #165f81;
}
.info-row:last-child {
  height: 60px;
  border-bottom: 0;
}
.info-cell.key {
  position: relative;
  height: 65px;
  box-sizing: border-box;
  padding: 3px 0 0 18px;
  background: #165f81;
  color: #fff;
  font-size: 32px;
  font-weight: 700;
  line-height: 38px;
}
.info-row:last-child .key {
  height: 60px;
}
.info-row:not(:last-child) .key::after {
  content: '';
  position: absolute;
  left: 0;
  right: 4px;
  bottom: 0;
  height: 5px;
  background: #fff;
}
.pay-table {
  margin: 36px 102px 0 105px;
  border: 5px solid #000;
  border-bottom-width: 7px;
  border-left: 0;
}
.pay-head,
.pay-body {
  display: grid;
  grid-template-columns: 404px 184px 203px 222px 263px 212px;
}
.pay-head {
  height: 61px;
  padding-bottom: 5px;
  background: #165f81;
  color: #fff;
  font-size: 30px;
  font-weight: 700;
}
.pay-body {
  height: 60px;
}
.pay-cell {
  display: flex;
  align-items: center;
  justify-content: center;
  box-sizing: border-box;
  border-right: 4px solid #fff;
}
.pay-cell:first-child {
  border-right: 0;
}
.pay-cell:last-child {
  border-right: 0;
}
.pay-body .pay-cell {
  border-right-color: #165f81;
}
.line-table {
  margin: 43px 102px 0 105px;
  border-top: 6px solid #000;
  border-right: 7px solid #000;
}
.line-head,
.line-body {
  display: grid;
  grid-template-columns: 596px 298px 298px 294px;
}
.line-head {
  height: 77px;
  box-sizing: border-box;
  background: #165f81;
  border-bottom: 1px solid #000;
  color: #fff;
  font-size: 47px;
  font-weight: 700;
}
.line-body {
  height: 60px;
}
.line-cell {
  display: flex;
  align-items: center;
  justify-content: center;
  box-sizing: border-box;
  padding-top: 16px;
  border-right: 1px solid #000;
}
.line-cell:last-child {
  border-right: 0;
}

/* scrollbar and divider */
.scrollbar {
  display: flex;
  flex-direction: column;
  align-items: center;
  width: 21px;
  flex: none;
  background: #f0f0f0;
  border-left: 1px solid #fafafa;
  box-sizing: border-box;
}
.scroll-grip {
  align-self: stretch;
  height: 8px;
  background: #dcdcdc;
  border: 1px solid #979797;
  border-top: 0;
  box-sizing: border-box;
}
.scroll-thumb {
  align-self: stretch;
  height: 243px;
  background: #cdcdcd;
}
.scroll-track {
  flex: 1;
}
.divider {
  display: flex;
  align-items: center;
  justify-content: center;
  width: 22px;
  flex: none;
  box-sizing: border-box;
  background: #e9e9e9;
  border-left: 1px solid #c8c8c8;
  border-right: 1px solid #c8c8c8;
}
.divider i {
  width: 0;
  height: 0;
  border-top: 6px solid transparent;
  border-bottom: 6px solid transparent;
  border-left: 7px solid #6e6e6e;
}

/* tools pane */
.panel {
  display: flex;
  flex-direction: column;
  width: 287px;
  flex: none;
  box-sizing: border-box;
  padding: 18px 17px 0 18px;
  background: #fcfcfc;
}
.search-box {
  height: 45px;
  box-sizing: border-box;
  padding-left: 16px;
  background: #fff;
  border: 1px solid #c8c8c8;
  color: #9a9a9a;
  font-size: 16px;
  line-height: 44px;
}
.tool-list {
  display: flex;
  flex-direction: column;
  margin: 16px -5px 0 12px;
}
.tool {
  position: relative;
  display: flex;
  align-items: center;
  gap: 14px;
  height: 57px;
  font-size: 18.300px;
}
.badge {
  position: absolute;
  top: 2px;
  right: 5px;
  height: 17px;
  width: 72px;
  background: #1473c7;
  border-radius: 2px;
  color: #fff;
  font-size: 11px;
  line-height: 17px;
  text-align: center;
}
.promo {
  margin-top: auto;
  height: 119px;
  box-sizing: border-box;
  padding-top: 24px;
  border-top: 1px solid #c8c8c8;
  text-align: center;
  font-size: 14px;
}
.promo p {
  margin: 0;
  font-size: 16px;
  font-weight: 500;
  line-height: 20px;
}
.promo a {
  display: block;
  margin-top: 12px;
  color: #1473c7;
  line-height: 20px;
}

/* start menu */
.start-menu {
  position: absolute;
  left: 0;
  bottom: 0;
  display: flex;
  align-items: flex-start;
  width: 810px;
  height: 797px;
  overflow: hidden;
  background:
    radial-gradient(ellipse 300px 430px at 590px 470px, #25323a 0%, rgba(37, 50, 58, 0.8) 55%, rgba(37, 50, 58, 0) 100%),
    #383838;
  color: #fff;
  font-size: 17px;
}
.rail {
  display: flex;
  flex-direction: column;
  align-items: center;
  justify-content: space-between;
  width: 62px;
  height: 800px;
  flex: none;
}
.hamburger {
  margin-top: 30px;
}
.rail-item {
  display: flex;
  align-items: center;
  justify-content: center;
  height: 60px;
}
.app-list {
  display: flex;
  flex-direction: column;
  width: 343px;
  flex: none;
  margin-top: -18px;
  padding-left: 18px;
  box-sizing: border-box;
}
.app-row {
  display: flex;
  align-items: center;
  gap: 10px;
  height: 45px;
  flex: none;
}
.app-row > span {
  margin-bottom: 4px;
}
.app-letter {
  width: 30px;
  height: 45px;
  flex: none;
  line-height: 45px;
  text-align: center;
}
.app-text {
  display: flex;
  flex-direction: column;
  height: 39px;
  margin-bottom: 4px;
  overflow: hidden;
  line-height: 23px;
}
.app-text small {
  font-size: 17px;
  color: #a8a8a8;
}
.app-text small.new {
  color: #5ba3e0;
}
.chevron {
  margin-left: auto;
  margin-right: 32px;
}
.xl-mark {
  font: 700 12px 'Noto Sans', sans-serif;
  fill: #fff;
}
.help-tile {
  font: 700 16px 'Noto Sans', sans-serif;
  fill: #fff;
}
.note-mark {
  font: 700 10px 'Noto Sans', sans-serif;
  fill: #fff;
}
.tiles {
  padding-top: 24px;
}
.tile-title {
  height: 22px;
  margin-bottom: 15px;
  line-height: 22px;
}
.tool-title {
  margin: 12px 0 16px;
}
.tile-grid {
  display: grid;
  grid-template-columns: repeat(3, 125px);
  gap: 5px;
}
.tile {
  position: relative;
  display: flex;
  align-items: center;
  justify-content: center;
  height: 125px;
  background: rgba(255, 255, 255, 0.09);
}
.tile.folder {
  align-items: flex-start;
  justify-content: flex-start;
  gap: 18px;
  padding: 9px 0 0 9px;
  box-sizing: border-box;
}
.tile-label {
  position: absolute;
  left: 10px;
  bottom: 4px;
  line-height: 25px;
}
.power-box {
  position: absolute;
  left: 2px;
  top: 734px;
  width: 382px;
  height: 59px;
  box-sizing: border-box;
  border: 8px solid #ed1c24;
  border-radius: 2px;
}
.pointer-arrow {
  position: absolute;
  left: 0;
  top: 0;
}
</style>
